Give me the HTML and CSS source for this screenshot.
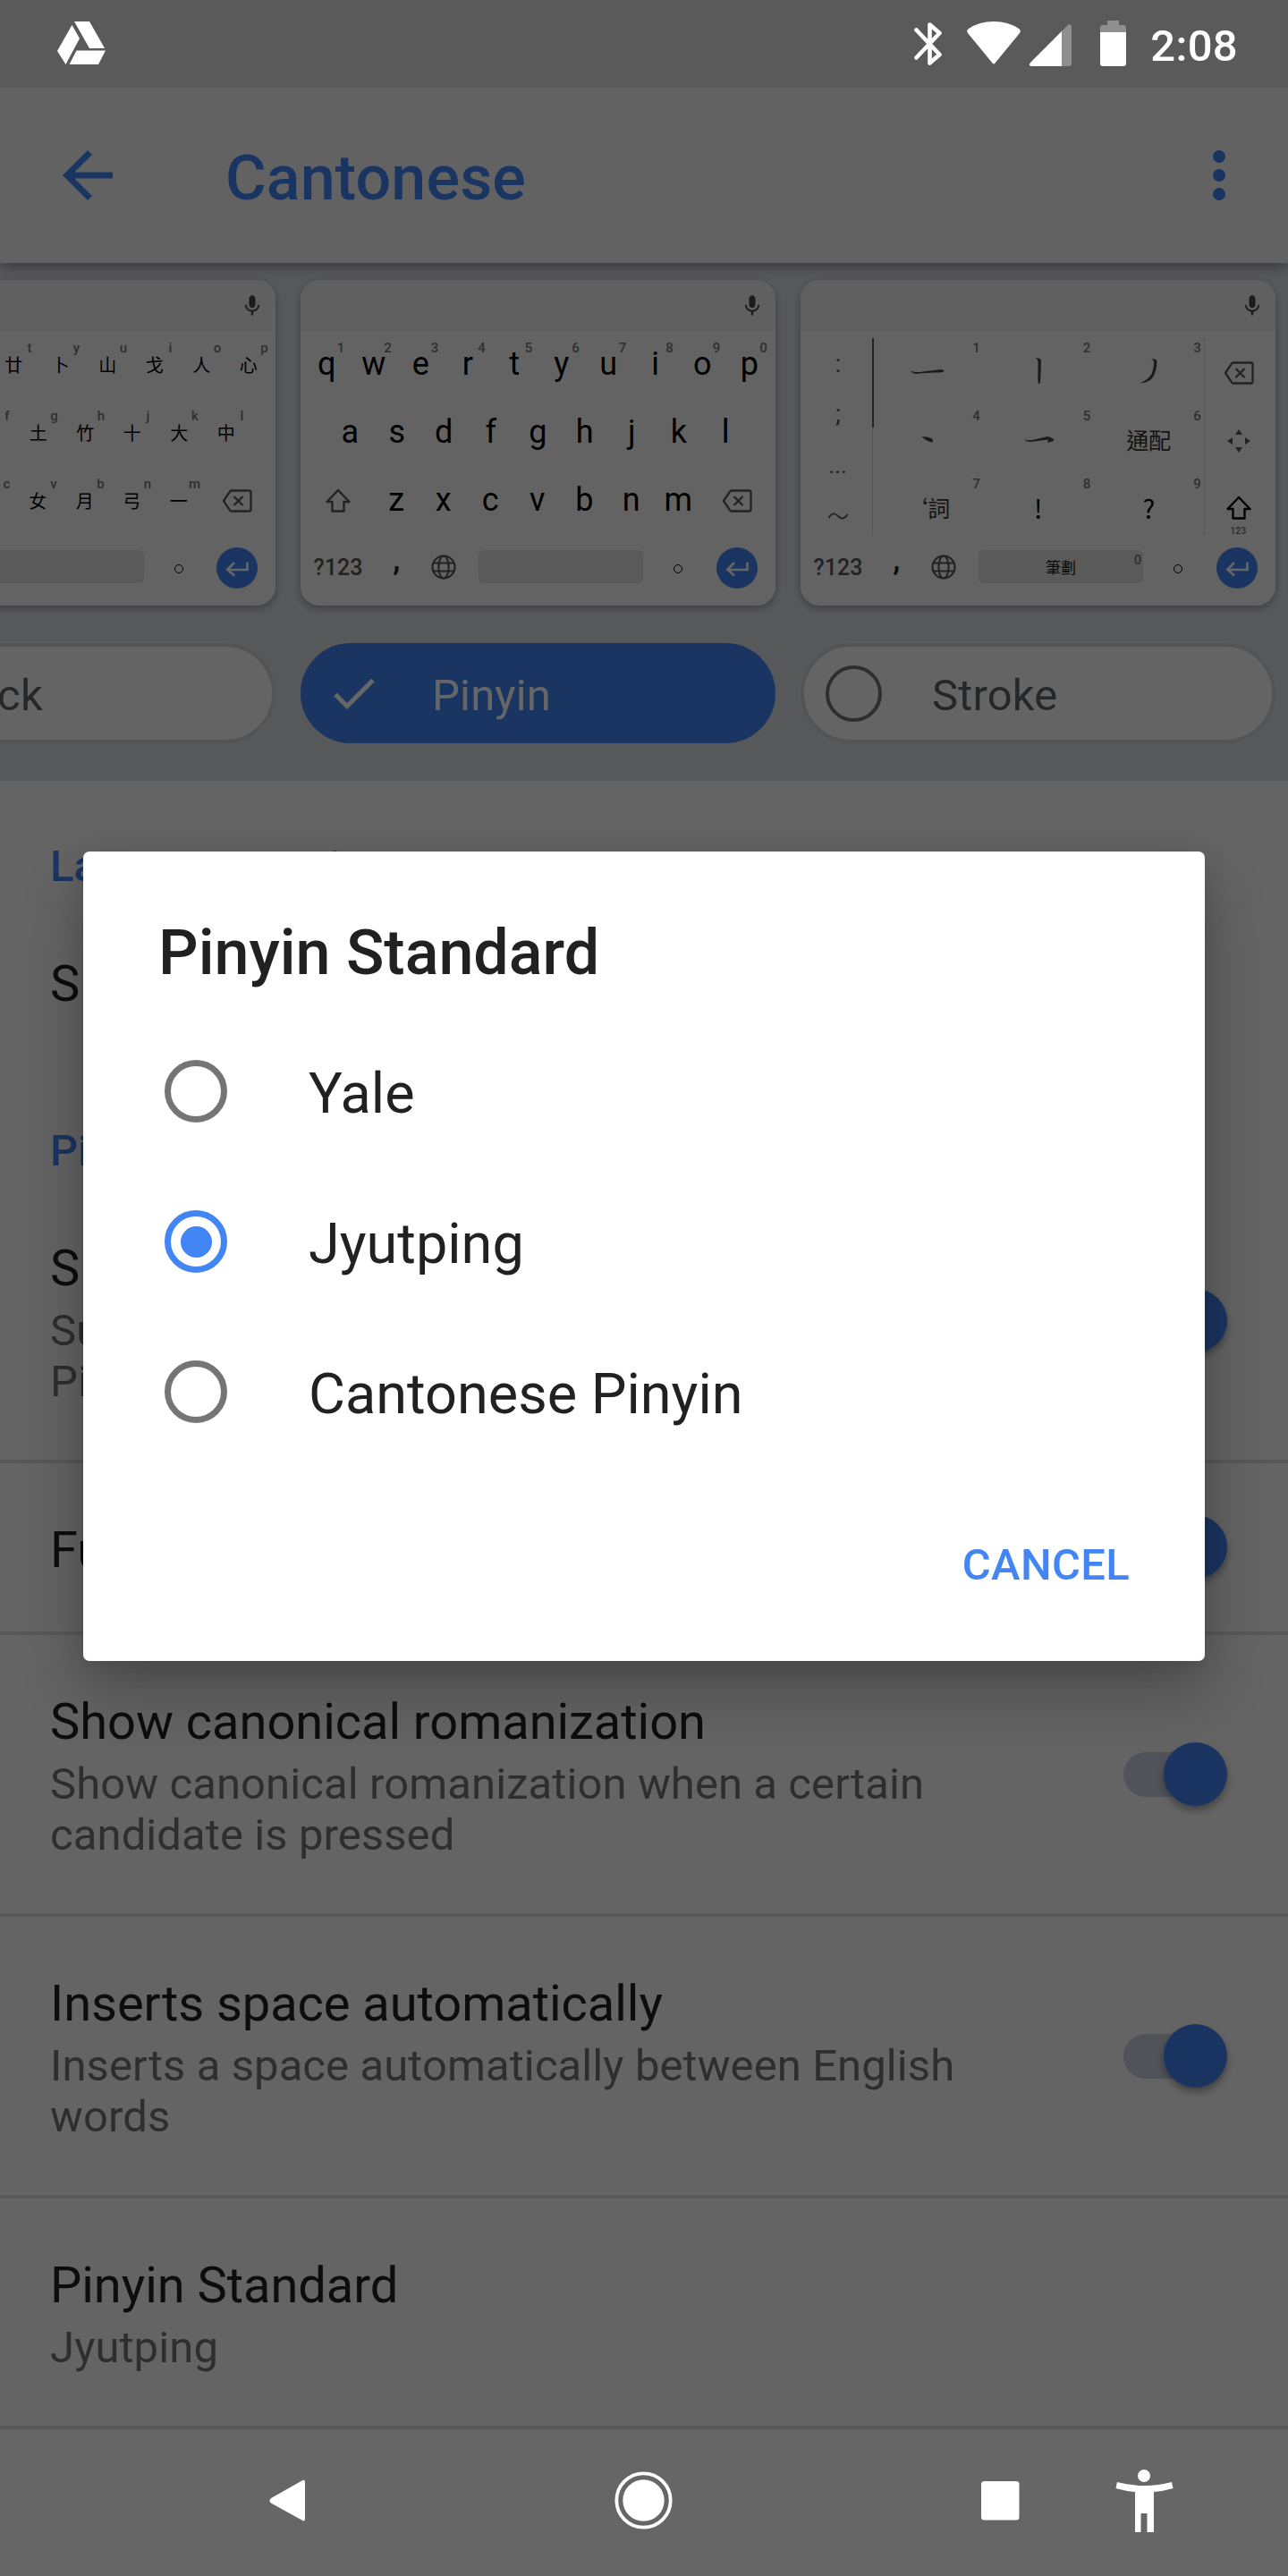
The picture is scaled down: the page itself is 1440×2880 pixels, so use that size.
FILE: index.html
```html
<!DOCTYPE html>
<html lang="en">
<head>
<meta charset="utf-8">
<title>Cantonese</title>
<link rel="stylesheet" href="styles.css">
</head>
<body>
<svg class="defs" aria-hidden="true">
  <symbol id="mic" viewBox="0 0 24 24"><path d="M12 14c1.66 0 3-1.34 3-3V5c0-1.66-1.34-3-3-3S9 3.34 9 5v6c0 1.66 1.34 3 3 3zm5.3-3c0 3-2.54 5.1-5.3 5.1S6.7 14 6.7 11H5c0 3.41 2.72 6.23 6 6.72V21h2v-3.28c3.28-.48 6-3.3 6-6.72z" fill="currentColor"/></symbol>
  <symbol id="back" viewBox="0 0 34 26"><path d="M11 1.5H30.5a2 2 0 0 1 2 2V22.5a2 2 0 0 1-2 2H11Q9.500 24.500 8.800 23.200L2 13 8.800 2.800Q9.500 1.500 11 1.500ZM13.500 8l10 10M23.500 8l-10 10" fill="none" stroke="currentColor" stroke-width="2.300"/></symbol>
  <symbol id="shift" viewBox="0 0 30 28"><path d="M15 2 2.500 15H8.500V25.500H21.500V15H27.500Z" fill="none" stroke="currentColor" stroke-width="2.400" stroke-linejoin="round"/></symbol>
  <symbol id="globe" viewBox="0 0 28 28"><g fill="none" stroke="currentColor" stroke-width="2.100"><circle cx="14" cy="14" r="12.500"/><ellipse cx="14" cy="14" rx="5.600" ry="12.500"/><path d="M2.500 9.500H25.500M2.500 18.500H25.500"/></g></symbol>
  <symbol id="enter" viewBox="0 0 26 18"><path d="M24.500 1.500V10H2.500M10 2 2.300 9.700 10 16.500" fill="none" stroke="currentColor" stroke-width="2.600"/></symbol>
</svg>

<div class="screen">
  <header class="statusbar">
    <svg class="drive" viewBox="0 0 54 48"><path d="M19 0H36L53 30H36ZM16.500 4 25 19 9.500 48 0 33ZM21.500 32.500H54L46 48H13.500Z" fill="#fff"/></svg>
    <div class="status-right">
      <svg class="bt" viewBox="0 0 31 50"><path d="M2.500 9.500 28.500 37 17.500 46.500V3.500L28.500 13 2.500 40.500" fill="none" stroke="#fff" stroke-width="4.600" stroke-linejoin="round" stroke-linecap="round"/></svg>
      <svg class="wifi" viewBox="0 0 60 48"><path d="M1 13Q-1 10 2 8Q14 0 30 0Q46 0 58 8Q61 10 59 13L31.500 46.500Q30 48.500 28.500 46.500Z" fill="#fff"/></svg>
      <svg class="signal" viewBox="0 0 47 47"><path d="M36 8 43 1Q47-1 47 3V44Q47 47 44 47H36Z" fill="#8f8f8f"/><path d="M36 8V47H3Q-2 47 1 43Z" fill="#fff"/></svg>
      <svg class="battery" viewBox="0 0 29 51"><path d="M8 0H21V5H26Q29 5 29 8V14H0V8Q0 5 3 5H8Z" fill="#8f8f8f"/><path d="M0 13H29V48Q29 51 26 51H3Q0 51 0 48Z" fill="#fff"/></svg>
      <span class="clock">2:08</span>
    </div>
  </header>

  <div class="appbar">
    <svg class="icon84" viewBox="0 0 24 24"><path d="M20 11H7.830l5.590-5.590L12 4l-8 8 8 8 1.410-1.410L7.830 13H20v-2z" fill="#4285f4"/></svg>
    <h1>Cantonese</h1>
    <svg class="icon84" viewBox="0 0 24 24"><g fill="#4285f4"><circle cx="12" cy="6" r="2"/><circle cx="12" cy="12" r="2"/><circle cx="12" cy="18" r="2"/></g></svg>
  </div>

  <section class="carousel">
    <div class="track">
      <div class="layout">
        <div class="card">
          <div class="strip"><svg class="mic"><use href="#mic"/></svg></div>
          <div class="keys han end">
            <div class="row"><b>廿<i>t</i></b><b>卜<i>y</i></b><b>山<i>u</i></b><b>戈<i>i</i></b><b>人<i>o</i></b><b>心<i>p</i></b></div>
            <div class="row inset"><b>火<i>f</i></b><b>土<i>g</i></b><b>竹<i>h</i></b><b>十<i>j</i></b><b>大<i>k</i></b><b>中<i>l</i></b></div>
            <div class="row"><b>金<i>c</i></b><b>女<i>v</i></b><b>月<i>b</i></b><b>弓<i>n</i></b><b>一<i>m</i></b><span class="wide"><svg class="k-back"><use href="#back"/></svg></span></div>
            <div class="row bottom"><span class="spacebar"></span><span class="dot"><u></u></span><span class="wide"><em><svg class="k-enter"><use href="#enter"/></svg></em></span></div>
          </div>
        </div>
        <div class="chip"><span class="chip-icon"></span><span class="chip-label">Quick</span></div>
      </div>

      <div class="layout">
        <div class="card">
          <div class="strip"><svg class="mic"><use href="#mic"/></svg></div>
          <div class="keys">
            <div class="row"><b>q<i>1</i></b><b>w<i>2</i></b><b>e<i>3</i></b><b>r<i>4</i></b><b>t<i>5</i></b><b>y<i>6</i></b><b>u<i>7</i></b><b>i<i>8</i></b><b>o<i>9</i></b><b>p<i>0</i></b></div>
            <div class="row inset"><b>a</b><b>s</b><b>d</b><b>f</b><b>g</b><b>h</b><b>j</b><b>k</b><b>l</b></div>
            <div class="row"><span class="wide"><svg class="k-shift"><use href="#shift"/></svg></span><b>z</b><b>x</b><b>c</b><b>v</b><b>b</b><b>n</b><b>m</b><span class="wide"><svg class="k-back"><use href="#back"/></svg></span></div>
            <div class="row bottom"><span class="wide sym">?123</span><span class="comma">,</span><span class="key"><svg class="k-globe"><use href="#globe"/></svg></span><span class="spacebar"></span><span class="dot"><u></u></span><span class="wide"><em><svg class="k-enter"><use href="#enter"/></svg></em></span></div>
          </div>
        </div>
        <div class="chip selected"><span class="chip-icon"><svg class="check" viewBox="0 0 46 35"><path d="M2 18.500 15 31.500 44 2.500" fill="none" stroke="#fff" stroke-width="5"/></svg></span><span class="chip-label">Pinyin</span></div>
      </div>

      <div class="layout">
        <div class="card">
          <div class="strip"><svg class="mic"><use href="#mic"/></svg></div>
          <div class="keys">
            <div class="stroke-pad">
              <div class="punct"><span>:</span><span>;</span><span class="ell">...</span><span class="tilde"><svg viewBox="0 0 24 10"><path d="M1.500 7C5 1 8.500 1.500 12 5S19 9 22.500 3" fill="none" stroke="#555" stroke-width="1.800"/></svg></span></div>
              <div class="strokes">
                <span><svg viewBox="0 0 38 30"><path d="M0 14.500Q6 17 13 15.500L34 13Q37 13 37.500 15Q36 17 27 16.500L10 17.500Q3 19 0 14.500Z"/></svg><i>1</i></span>
                <span><svg viewBox="0 0 38 30"><path d="M16 0Q22 .500 22 3L21.500 17Q21.500 24 20.500 29H19Q18 25 18.500 18V4Q18 2 16 0Z"/></svg><i>2</i></span>
                <span><svg viewBox="0 0 38 30"><path d="M22 1Q28 1 28.500 4Q28 18 22 24Q17 28 9 28.500Q18 25 22 19Q25 13 25 4Q24 2 22 1Z"/></svg><i>3</i></span>
                <span><svg viewBox="0 0 38 30"><path d="M12.500 12Q19 12 23.500 14Q26.500 17 24 18.500Q17 17 12.500 12Z"/></svg><i>4</i></span>
                <span><svg viewBox="0 0 38 30"><path d="M3 15.500Q8 17 14 15.500L29 12Q33 12.500 36 15Q36.500 17 34 17.500L29 19 30 15.500 14 17.500Q6 19 3 15.500Z"/></svg><i>5</i></span>
                <span class="zh">通配<i>6</i></span>
                <span class="zh word">‘詞<i>7</i></span>
                <span class="mark">!<i>8</i></span>
                <span class="mark">?<i>9</i></span>
              </div>
              <div class="side">
                <span><svg class="k-back"><use href="#back"/></svg></span>
                <span><svg class="k-move" viewBox="0 0 26 26"><path d="M13 0 17 6H9ZM13 26 9 20H17ZM0 13 6 9V17ZM26 13 20 17V9Z" fill="#555"/></svg></span>
                <span class="caps"><svg class="k-shift"><use href="#shift"/></svg><small>123</small></span>
              </div>
            </div>
            <div class="row bottom"><span class="wide sym">?123</span><span class="comma">,</span><span class="key"><svg class="k-globe"><use href="#globe"/></svg></span><span class="spacebar">筆劃<i>0</i></span><span class="dot"><u></u></span><span class="wide"><em><svg class="k-enter"><use href="#enter"/></svg></em></span></div>
          </div>
        </div>
        <div class="chip"><span class="chip-icon"><span class="ring"></span></span><span class="chip-label">Stroke</span></div>
      </div>
    </div>
  </section>

  <main class="settings">
    <h2>Language settings</h2>
    <div class="item first"><div class="text"><p class="title">Simplified</p></div></div>
    <h2>Pinyin</h2>
    <div class="item two"><div class="text"><p class="title">Suggestions</p><p class="summary">Suggest candidates from<br>Pinyin</p></div><span class="switch"></span></div>
    <div class="item one"><div class="text"><p class="title">Fuzzy Pinyin</p></div><span class="switch"></span></div>
    <div class="item two"><div class="text"><p class="title">Show canonical romanization</p><p class="summary">Show canonical romanization when a certain<br>candidate is pressed</p></div><span class="switch"></span></div>
    <div class="item two"><div class="text"><p class="title">Inserts space automatically</p><p class="summary">Inserts a space automatically between English<br>words</p></div><span class="switch"></span></div>
    <div class="item last"><div class="text"><p class="title">Pinyin Standard</p><p class="summary">Jyutping</p></div></div>
  </main>

  <nav class="navbar">
    <svg viewBox="0 0 1440 168">
      <g fill="#fff">
        <path d="M337.500 61.500Q341 59.500 341 63V104Q341 108 337.500 105.500L303 86.500Q300 84 303 81Z"/>
        <circle cx="719.500" cy="83.500" r="23.200"/>
        <rect x="1097" y="62" width="42.500" height="43.500" rx="3.500"/>
        <circle cx="1279" cy="56" r="7"/>
        <path d="M1249 63Q1279 71 1310 63L1311.500 70Q1301 73 1290 74V119H1282.500V98H1275.500V119H1269V74Q1258 73 1247.500 70Z"/>
      </g>
      <circle cx="719.500" cy="83.500" r="30.200" fill="none" stroke="#fff" stroke-width="3.800"/>
    </svg>
  </nav>

  <div class="scrim"></div>
  <div class="dialog" role="dialog">
    <h3>Pinyin Standard</h3>
    <label class="option"><span class="radio"></span><span class="option-label">Yale</span></label>
    <label class="option"><span class="radio on"></span><span class="option-label">Jyutping</span></label>
    <label class="option"><span class="radio"></span><span class="option-label">Cantonese Pinyin</span></label>
    <div class="actions"><span class="cancel">CANCEL</span></div>
  </div>
</div>
</body>
</html>
```

FILE: styles.css
```css
* { box-sizing: border-box; margin: 0; padding: 0; }
body { width: 1440px; background: #646464; font-family: Roboto, "Noto Sans CJK TC", sans-serif; }
svg { display: block; flex: none; }
.defs { display: none; }
.screen { position: relative; width: 1440px; height: 2880px; overflow: hidden; background: #fafafa; display: flex; flex-direction: column; }

/* Status bar: its icons sit above the scrim */
.statusbar { position: relative; z-index: 3; height: 98px; flex: none; background: #5a5a5a; display: flex; justify-content: space-between; align-items: flex-start; padding: 24px 56px 0 64px; }
.drive { width: 54px; height: 48px; }
.status-right { display: flex; align-items: flex-start; }
.bt { width: 31px; height: 50px; }
.wifi { width: 60px; height: 48px; margin-left: 28px; }
.signal { width: 47px; height: 47px; margin: 3px 0 0 10px; }
.battery { width: 29px; height: 51px; margin: -1px 0 0 32px; }
.clock { font-size: 49px; font-weight: 500; line-height: 57px; letter-spacing: .3px; color: #fff; margin: -1px 0 0 27px; }

.appbar { position: relative; z-index: 1; height: 196px; flex: none; background: #f5f5f5; display: flex; align-items: center; padding: 0 35px 0 56px; box-shadow: 0 4px 14px rgba(0,0,0,.35); }
.icon84 { width: 84px; height: 84px; }
.appbar h1 { flex: 1; margin-left: 112px; font-size: 70px; font-weight: 500; line-height: 82px; letter-spacing: .15px; color: #4285f4; padding-top: 5px; }

/* Keyboard layout carousel */
.carousel { height: 579px; flex: none; background: #dadce0; overflow: hidden; padding-top: 19px; }
.track { display: flex; gap: 28px; width: 1649px; margin-left: -223px; }
.layout { width: 531px; display: flex; flex-direction: column; gap: 42px; }
.card { height: 364px; border-radius: 21px; background: #f8f8f8; overflow: hidden; box-shadow: 0 3px 8px rgba(0,0,0,.3); }
.strip { height: 57px; background: #f0f0f0; display: flex; justify-content: flex-end; align-items: center; padding-right: 12px; color: #474747; }
.mic { width: 28px; height: 28px; }
.keys { padding: 0 3px; display: flex; flex-direction: column; }
.row { display: flex; height: 76px; }
.row.inset { padding: 0 26px; }
.end .row { justify-content: flex-end; }
.end .row:not(.inset) { padding-right: 1px; }
.row b { position: relative; width: 52.500px; font-weight: 400; font-size: 36px; line-height: 42px; padding-top: 16px; text-align: center; color: #000; flex: none; }
.han .row b { font-size: 20px; line-height: 30px; padding-top: 23px; font-family: "Noto Sans CJK TC", sans-serif; font-weight: 400; }
.keys i { position: absolute; font-family: Roboto, sans-serif; font-style: normal; font-weight: 500; font-size: 15px; line-height: 18px; color: #757575; width: 20px; text-align: center; }
.row b i { left: 32px; top: 10px; }
.han .row b i { left: 34px; }
.wide { width: 78px; flex: none; display: flex; justify-content: center; align-items: center; color: #555; }
.k-back { width: 34px; height: 26px; }
.k-shift { width: 30px; height: 28px; }
.k-globe { width: 28px; height: 28px; }
.k-move { width: 26px; height: 26px; }
.bottom { height: 73px; align-items: center; }
.sym { font-size: 25px; font-weight: 500; line-height: 30px; }
.comma, .dot, .key { width: 52.500px; flex: none; display: flex; justify-content: center; align-items: center; color: #555; }
.comma { font-size: 36px; line-height: 38px; font-weight: 500; color: #222; padding-bottom: 20px; }
.key svg { margin-top: -2px; }
.spacebar { position: relative; width: 184px; height: 37px; border-radius: 5px; background: #e1e1e1; margin: -2px 13px 0; flex: none; display: flex; align-items: center; justify-content: center; font-family: "Noto Sans CJK TC", sans-serif; font-size: 17px; color: #111; }
.spacebar i { right: -4px; top: 2px; }
.dot u { width: 10px; height: 10px; border: 1.500px solid #000; border-radius: 50%; margin-top: 2px; }
.wide em { width: 46px; height: 46px; border-radius: 50%; background: #4285f4; color: #fff; display: flex; align-items: center; justify-content: center; }
.k-enter { width: 26px; height: 18px; margin-top: 2px; }

.stroke-pad { display: flex; height: 228px; padding-top: 8px; margin: 0 -3px; }
.punct { width: 80px; flex: none; padding-top: 1px; }
.punct span { display: flex; justify-content: center; align-items: center; height: 56px; padding-left: 4px; font-size: 28px; line-height: 42px; color: #555; }
.punct .ell { font-size: 21px; letter-spacing: 1px; font-weight: 500; height: 62px; }
.punct .tilde { height: 48px; }
.punct svg { width: 24px; height: 10px; }
.strokes { position: relative; flex: none; width: 372px; height: 220px; display: grid; grid-template-columns: repeat(3, 123.500px); grid-auto-rows: 76px; border-right: 1px solid #d4d4d4; border-left: 1px solid #d4d4d4; }
.strokes::before { content: ""; position: absolute; left: -1px; top: 0; width: 2px; height: 100px; background: #606060; }
.strokes span { position: relative; display: flex; justify-content: center; padding-top: 22px; padding-right: 1px; height: 76px; }
.strokes svg { width: 38px; height: 30px; fill: #444; }
.strokes i { right: -2px; top: 2px; }
.strokes .zh { font: 400 25px/30px "Noto Sans CJK TC", sans-serif; color: #333; }
.strokes .mark { font: 400 29px/30px "Noto Sans CJK TC", sans-serif; color: #000; }
.side { flex: 1; color: #555; padding: 1px 4px 0 0; }
.side span { display: flex; justify-content: center; align-items: center; height: 76px; }
.side .caps { flex-direction: column; color: #000; padding-top: 16px; }
.side small { font-size: 10px; line-height: 12px; color: #666; margin-top: 6px; font-weight: 500; letter-spacing: .3px; }

.chip { width: 531px; height: 112px; border-radius: 56px; border: 4px solid #d2d2d2; background: #fafafa; display: flex; align-items: center; padding-left: 24px; color: #5f6368; }
.chip-icon { width: 63px; display: flex; justify-content: center; flex: none; }
.ring { width: 63px; height: 63px; border: 4px solid #737373; border-radius: 50%; }
.chip-label { margin-left: 56px; font-size: 49px; line-height: 57px; letter-spacing: .15px; padding-top: 5px; }
.selected { background: #4285f4; border-color: #4285f4; color: #fff; }
.check { width: 46px; height: 35px; }

/* Settings list */
.settings { flex: none; height: 1840px; }
.settings h2 { height: 130px; padding: 67px 0 0 56px; font-size: 49px; line-height: 57px; font-weight: 500; color: #4285f4; }
.item { display: flex; justify-content: space-between; align-items: center; padding: 0 68px 0 56px; border-bottom: 4px solid #dcdcdc; }
.text { align-self: flex-start; padding-top: 64px; }
.first { height: 188px; border: 0; }
.two { height: 315px; }
.one { height: 192px; }
.last { height: 260px; }
.title { font-size: 56px; line-height: 66px; letter-spacing: -.04px; color: #212121; white-space: nowrap; }
.summary { font-size: 49px; line-height: 57px; letter-spacing: .09px; margin-top: 8px; color: #737373; white-space: nowrap; }
.switch { position: relative; width: 116px; height: 50px; flex: none; border-radius: 25px; background: #c8d0e2; }
.switch::after { content: ""; position: absolute; right: 0; top: -11px; width: 71px; height: 71px; border-radius: 50%; background: #4285f4; box-shadow: 0 5px 8px rgba(0,0,0,.35); }

.navbar { position: absolute; z-index: 3; left: 0; bottom: 0; width: 1440px; height: 168px; background: #666; border-top: 4px solid #585858; }
.navbar svg { width: 1440px; height: 168px; margin-top: -4px; }

.scrim { position: absolute; z-index: 2; inset: 0; background: rgba(0,0,0,.6); }
.dialog { position: absolute; z-index: 4; left: 93px; top: 952px; width: 1254px; height: 905px; border-radius: 7px; background: #fff; color: #212121; box-shadow: 0 36px 70px rgba(0,0,0,.24), 0 6px 30px rgba(0,0,0,.1); }
.dialog h3 { font-size: 70px; line-height: 82px; font-weight: 500; padding: 72px 0 0 84px; height: 184px; }
.option { display: flex; align-items: center; height: 168px; padding-left: 91px; font-size: 63px; line-height: 74px; }
.option-label { padding-top: 5px; }
.radio { width: 70px; height: 70px; flex: none; border: 7px solid #757575; border-radius: 50%; margin-right: 91px; display: flex; align-items: center; justify-content: center; }
.radio.on { border-color: #4285f4; }
.radio.on::after { content: ""; width: 35px; height: 35px; border-radius: 50%; background: #4285f4; }
.actions { display: flex; justify-content: flex-end; padding: 81px 84px 0 0; }
.cancel { color: #4285f4; font-size: 49px; line-height: 57px; letter-spacing: .3px; font-weight: 500; }
```
